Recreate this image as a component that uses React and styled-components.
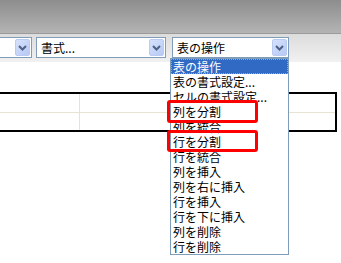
import React from "react";
import styled, { createGlobalStyle } from "styled-components";

const Global = createGlobalStyle`
  html, body { margin: 0; padding: 0; background: #fff; }
  body { font-family: "Noto Sans CJK JP", "Noto Sans", sans-serif; font-size: 12px; color: #000; overflow: hidden; }
`;

const Page = styled.div`
  width: 341px;
  height: 263px;
  position: relative;
  overflow: hidden;
  background: #fff;
`;

const Header = styled.div`
  height: 33px;
  background: linear-gradient(#8d8d8d, #b4b4b4);
  border-bottom: 1px solid #9a9a9a;
`;

const Toolbar = styled.div`
  height: 28px;
  box-sizing: border-box;
  padding-top: 3px;
  background: linear-gradient(#dcdcdc, #f1f1f1);
  display: flex;
  align-items: flex-start;
  gap: 4px;
`;

const Select = styled.div`
  position: relative;
  box-sizing: border-box;
  height: 21px;
  width: ${(p) => p.$w}px;
  margin-left: ${(p) => p.$ml || 0}px;
  border: 1px solid #7f9db9;
  ${(p) => (p.$noLeft ? "border-left: none;" : "")}
  background: #fff;
  display: flex;
  align-items: center;
  padding-left: 4px;
  font-size: 12px;
  line-height: 15px;
  white-space: nowrap;
`;

const SelectText = styled.span`
  flex: 1;
`;

const DropBtn = styled.div`
  box-sizing: border-box;
  width: 15px;
  height: 17px;
  margin-right: 1px;
  border: 1px solid #b9cbf3;
  border-radius: 2px;
  background: linear-gradient(135deg, #d6e1fb, #b6c9f6);
  display: flex;
  align-items: center;
  justify-content: center;
`;

const List = styled.div`
  position: absolute;
  top: 20px;
  left: -3px;
  width: 119px;
  box-sizing: border-box;
  border: 1px solid #7f9db9;
  background: #fff;
  z-index: 5;
`;

const Item = styled.div`
  box-sizing: border-box;
  height: 15px;
  line-height: 15px;
  padding-left: ${(p) => (p.$sel ? 1 : 2)}px;
  font-size: 12px;
  white-space: nowrap;
  overflow: hidden;
  ${(p) =>
    p.$sel
      ? `background: #316ac5; color: #fff; border: 1px dotted #e0a030; line-height: 13px;`
      : `color: #000;`}
`;

const RedBox = styled.div`
  position: absolute;
  left: -4px;
  width: 91px;
  top: ${(p) => p.$top}px;
  height: ${(p) => p.$h}px;
  box-sizing: border-box;
  border: 3px solid #ff0000;
  border-radius: 3px;
`;

const Content = styled.div`
  padding-top: 30px;
`;

const Table = styled.div`
  width: 337px;
  box-sizing: border-box;
  border-top: 2px solid #000;
  border-bottom: 2px solid #000;
  border-right: 2px solid #000;
  display: grid;
  grid-template-columns: 79px 1fr;
  grid-template-rows: 18px 17px;
  row-gap: 1px;
  background: #e8e2d0;
  column-gap: 1px;
`;

const Cell = styled.div`
  background: #fff;
`;

const Chevron = () => (
  <svg width="9" height="6" viewBox="0 0 9 6">
    <path d="M1 1 L4.5 4.5 L8 1" fill="none" stroke="#4d6185" strokeWidth="2" />
  </svg>
);

const items = [
  "表の操作",
  "表の書式設定...",
  "セルの書式設定...",
  "列を分割",
  "列を統合",
  "行を分割",
  "行を統合",
  "列を挿入",
  "列を右に挿入",
  "行を挿入",
  "行を下に挿入",
  "列を削除",
  "行を削除",
];

export default function App() {
  return (
    <Page>
      <Global />
      <Header />
      <Toolbar>
        <Select $w={32} $noLeft>
          <SelectText />
          <DropBtn><Chevron /></DropBtn>
        </Select>
        <Select $w={130}>
          <SelectText>書式...</SelectText>
          <DropBtn><Chevron /></DropBtn>
        </Select>
        <Select $w={117} $ml={2}>
          <SelectText>表の操作</SelectText>
          <DropBtn><Chevron /></DropBtn>
          <List>
            {items.map((t, i) => (
              <Item key={i} $sel={i === 0}>{t}</Item>
            ))}
            <RedBox $top={41} $h={23} />
            <RedBox $top={71} $h={22} />
          </List>
        </Select>
      </Toolbar>
      <Content>
        <Table>
          <Cell />
          <Cell />
          <Cell />
          <Cell />
        </Table>
      </Content>
    </Page>
  );
}
